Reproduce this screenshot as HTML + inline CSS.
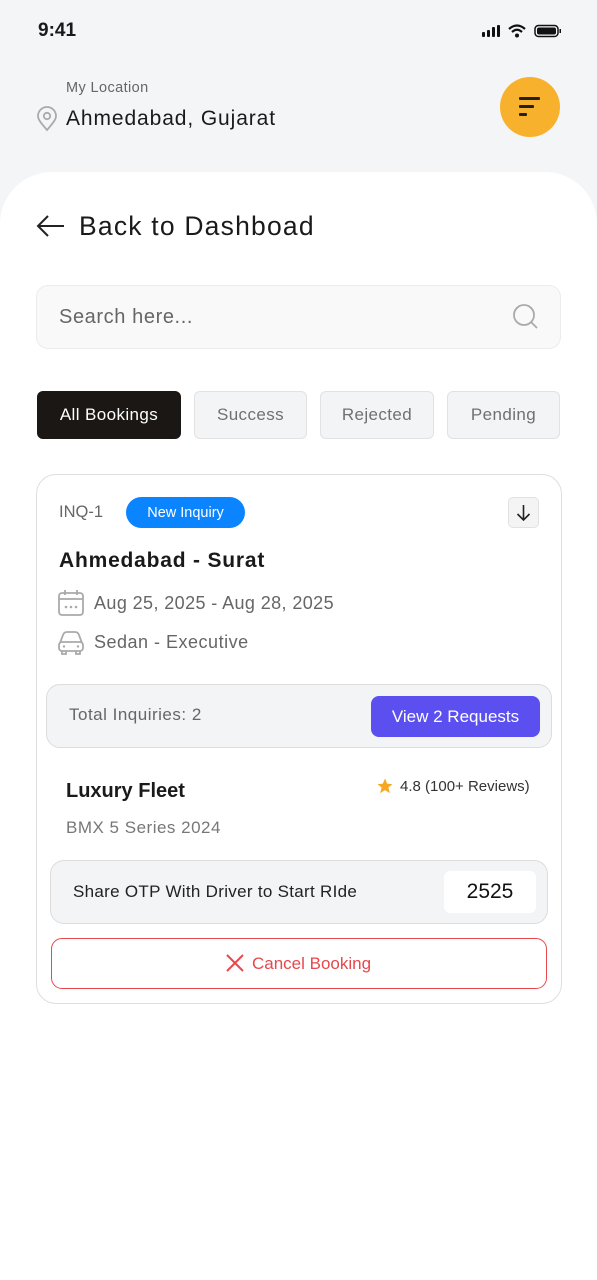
<!DOCTYPE html>
<html><head><meta charset="utf-8">
<style>
*{margin:0;padding:0;box-sizing:border-box}
body{width:597px;height:1280px;background:#f4f5f7;font-family:"Liberation Sans",sans-serif;position:relative;overflow:hidden;color:#1a1a1a}
.a{position:absolute;white-space:nowrap}
.sheet{position:absolute;left:0;top:172px;width:597px;height:1108px;background:#fff;border-radius:52px 52px 0 0}
.tab{position:absolute;top:391px;height:48px;border-radius:6px;background:#f3f4f6;border:1.5px solid #e2e2e2;color:#707070;font-size:17px;display:flex;align-items:center;justify-content:center;letter-spacing:.4px}
</style></head><body>
<div class="a" style="left:38px;top:20px;font-size:19px;font-weight:bold">9:41</div>
<svg class="a" style="left:480px;top:23px" width="82" height="16" viewBox="0 0 82 16">
<rect x="2" y="9" width="3" height="5" rx="1" fill="#111"/><rect x="7" y="7" width="3" height="7" rx="1" fill="#111"/><rect x="12" y="4" width="3" height="10" rx="1" fill="#111"/><rect x="17" y="2" width="3" height="12" rx="1" fill="#111"/>
<path d="M29 6 Q37 -1 45 6" stroke="#111" stroke-width="2.2" fill="none"/><path d="M32 9 Q37 4.5 42 9" stroke="#111" stroke-width="2.2" fill="none"/><circle cx="37" cy="12.5" r="2" fill="#111"/>
<rect x="55" y="2.5" width="23" height="11" rx="3.5" fill="none" stroke="#111" stroke-width="1.5"/><rect x="57" y="4.5" width="19" height="7" rx="2" fill="#111"/><rect x="79.5" y="6" width="1.5" height="4" fill="#111"/>
</svg>
<div class="a" style="left:66px;top:80px;font-size:14.5px;color:#666;letter-spacing:.4px">My Location</div>
<svg class="a" style="left:35px;top:106px" width="24" height="26" viewBox="0 0 24 26"><path d="M12 24 C5 16 3 13 3 10 A9 9 0 0 1 21 10 C21 13 19 16 12 24Z" fill="none" stroke="#aaa" stroke-width="1.8"/><circle cx="12" cy="10" r="3.2" fill="none" stroke="#aaa" stroke-width="1.8"/></svg>
<div class="a" style="left:66px;top:107px;font-size:21px;letter-spacing:.9px">Ahmedabad, Gujarat</div>
<div class="a" style="left:500px;top:77px;width:60px;height:60px;border-radius:50%;background:#f8b12c"></div>
<div class="a" style="left:519px;top:97px;width:21px;height:3px;background:#222;border-radius:1px"></div>
<div class="a" style="left:519px;top:105px;width:15px;height:3px;background:#222;border-radius:1px"></div>
<div class="a" style="left:519px;top:113px;width:8px;height:3px;background:#222;border-radius:1px"></div>
<div class="sheet"></div>
<svg class="a" style="left:36px;top:214px" width="30" height="24" viewBox="0 0 30 24"><path d="M28 12H2M12 2 2 12 12 22" stroke="#222" stroke-width="2" fill="none"/></svg>
<div class="a" style="left:79px;top:211px;font-size:26.5px;letter-spacing:1.2px;color:#1a1a1a">Back to Dashboad</div>
<div class="a" style="left:36px;top:285px;width:525px;height:64px;border-radius:12px;background:#f9f9f9;border:1px solid #ececec"></div>
<div class="a" style="left:59px;top:306px;font-size:20px;color:#666;letter-spacing:.6px">Search here...</div>
<svg class="a" style="left:512px;top:303px" width="28" height="28" viewBox="0 0 28 28"><circle cx="12" cy="12" r="10" fill="none" stroke="#aaa" stroke-width="1.8"/><path d="M19.5 19.5 25 25" stroke="#aaa" stroke-width="1.8"/></svg>
<div class="tab" style="left:37px;width:144px;background:#1a1714;border-color:#1a1714;color:#fff">All Bookings</div>
<div class="tab" style="left:194px;width:113px">Success</div>
<div class="tab" style="left:320px;width:114px">Rejected</div>
<div class="tab" style="left:447px;width:113px">Pending</div>
<div class="a" style="left:36px;top:474px;width:526px;height:530px;border:1.5px solid #dedede;border-radius:20px"></div>
<div class="a" style="left:59px;top:503px;font-size:16.5px;color:#666">INQ-1</div>
<div class="a" style="left:126px;top:497px;width:119px;height:31px;border-radius:16px;background:#0a84ff;color:#fff;font-size:14.5px;display:flex;align-items:center;justify-content:center">New Inquiry</div>
<div class="a" style="left:508px;top:497px;width:31px;height:31px;border-radius:5px;background:#f4f4f4;border:1px solid #e2e2e2"></div>
<svg class="a" style="left:514px;top:503px" width="19" height="19" viewBox="0 0 19 19"><path d="M9.5 2V17M3.5 11 9.5 17 15.5 11" stroke="#222" stroke-width="1.6" fill="none"/></svg>
<div class="a" style="left:59px;top:549px;font-size:21px;font-weight:bold;letter-spacing:.8px">Ahmedabad - Surat</div>
<svg class="a" style="left:57px;top:589px" width="28" height="28" viewBox="0 0 28 28"><rect x="2" y="4" width="24" height="22" rx="3" fill="none" stroke="#aaa" stroke-width="1.8"/><path d="M2 10H26M8 1V6M20 1V6" stroke="#aaa" stroke-width="1.8"/><circle cx="9" cy="18" r="1.3" fill="#aaa"/><circle cx="14" cy="18" r="1.3" fill="#aaa"/><circle cx="19" cy="18" r="1.3" fill="#aaa"/></svg>
<div class="a" style="left:94px;top:593px;font-size:18px;color:#666;letter-spacing:.4px">Aug 25, 2025 - Aug 28, 2025</div>
<svg class="a" style="left:57px;top:629px" width="28" height="28" viewBox="0 0 28 28"><path d="M3 14 6 6Q7 3 10 3H18Q21 3 22 6L25 14" fill="none" stroke="#aaa" stroke-width="1.8"/><rect x="2" y="13" width="24" height="9" rx="3" fill="none" stroke="#aaa" stroke-width="1.8"/><path d="M5 22V25H9V22M19 22V25H23V22" fill="none" stroke="#aaa" stroke-width="1.8"/><circle cx="7" cy="17.5" r="1.2" fill="#aaa"/><circle cx="21" cy="17.5" r="1.2" fill="#aaa"/></svg>
<div class="a" style="left:94px;top:632px;font-size:18px;color:#666;letter-spacing:.5px">Sedan - Executive</div>
<div class="a" style="left:46px;top:684px;width:506px;height:64px;border-radius:14px;background:#f3f4f6;border:1px solid #dcdcdc"></div>
<div class="a" style="left:69px;top:705px;font-size:17px;color:#666;letter-spacing:.5px">Total Inquiries: 2</div>
<div class="a" style="left:371px;top:696px;width:169px;height:41px;border-radius:8px;background:#5b4ff0;color:#fff;font-size:17px;display:flex;align-items:center;justify-content:center">View 2 Requests</div>
<div class="a" style="left:66px;top:780px;font-size:20px;font-weight:bold">Luxury Fleet</div>
<svg class="a" style="left:376px;top:777px" width="18" height="18" viewBox="0 0 24 24"><path d="M12 2 15 9 22 9.5 16.5 14 18.5 21.5 12 17.5 5.5 21.5 7.5 14 2 9.5 9 9Z" fill="#f6a823"/></svg>
<div class="a" style="left:400px;top:778px;font-size:15px;color:#333">4.8 (100+ Reviews)</div>
<div class="a" style="left:66px;top:818px;font-size:17px;color:#777;letter-spacing:.5px">BMX 5 Series 2024</div>
<div class="a" style="left:50px;top:860px;width:498px;height:64px;border-radius:14px;background:#f3f4f6;border:1px solid #dcdcdc"></div>
<div class="a" style="left:73px;top:882px;font-size:17px;color:#222;letter-spacing:.3px">Share OTP With Driver to Start RIde</div>
<div class="a" style="left:444px;top:871px;width:92px;height:42px;border-radius:6px;background:#fff;font-size:21px;display:flex;align-items:center;justify-content:center;color:#111">2525</div>
<div class="a" style="left:51px;top:938px;width:496px;height:51px;border-radius:11px;border:1.5px solid #e5484d"></div>
<svg class="a" style="left:226px;top:954px" width="18" height="18" viewBox="0 0 18 18"><path d="M1 1 17 17M17 1 1 17" stroke="#e5484d" stroke-width="2"/></svg>
<div class="a" style="left:252px;top:954px;font-size:17px;color:#e5484d">Cancel Booking</div>
</body></html>
